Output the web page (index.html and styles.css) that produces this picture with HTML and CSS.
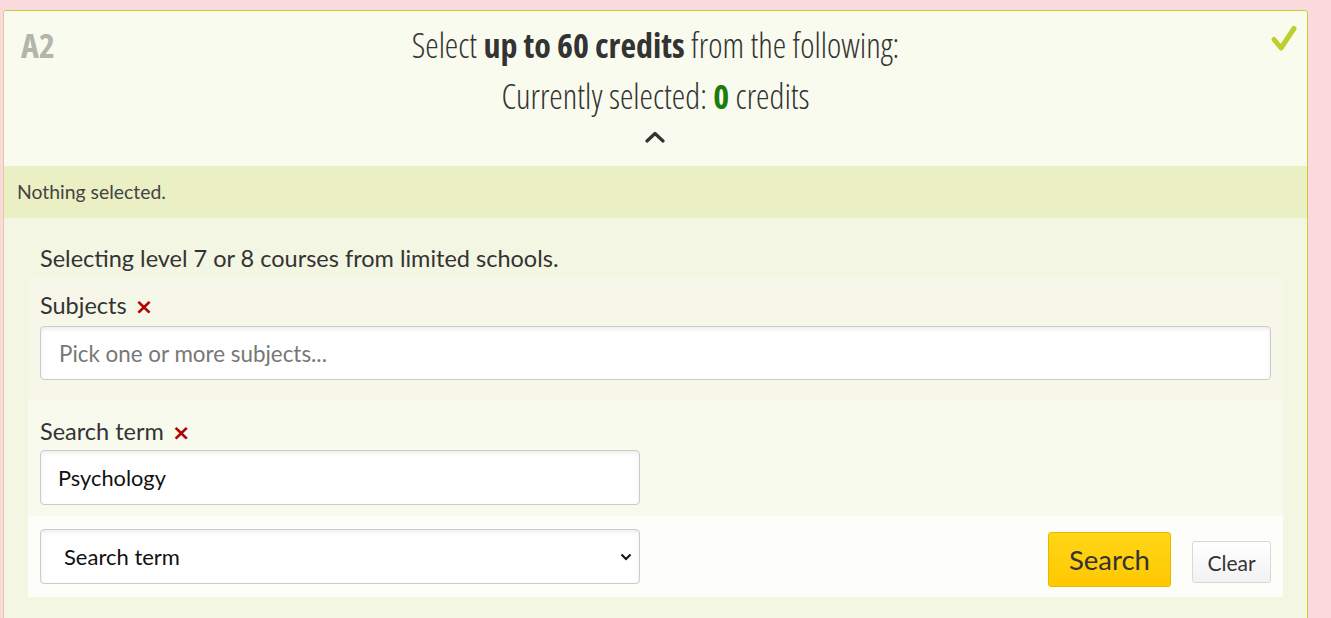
FILE: index.html
```html
<!DOCTYPE html>
<html lang="en">
<head>
<meta charset="utf-8">
<title>Course selection</title>
<link rel="stylesheet" href="styles.css">
</head>
<body>
<section class="card">
  <header class="card-head">
    <div class="code">A2</div>
    <div class="title">
      <p class="title-line">Select <strong>up to 60 credits</strong> from the following:</p>
      <p class="title-line">Currently selected: <strong class="count">0</strong> credits</p>
      <svg class="collapse" width="20" height="12" viewBox="0 0 20 12"><polyline points="2,10 10,2.5 18,10" fill="none" stroke="#333" stroke-width="3.2" stroke-linecap="round" stroke-linejoin="round"/></svg>
    </div>
    <div class="status">
      <svg width="28" height="28" viewBox="0 0 28 28"><polyline points="4,14.5 11,23 24,3.5" fill="none" stroke="#bccf2c" stroke-width="5" stroke-linecap="round" stroke-linejoin="round"/></svg>
    </div>
  </header>
  <div class="selection-bar">Nothing selected.</div>
  <div class="card-body">
    <p class="intro">Selecting level 7 or 8 courses from limited schools.</p>
    <div class="field field-subjects">
      <label class="label">Subjects <span class="remove">×</span></label>
      <input class="input input-wide" type="text" placeholder="Pick one or more subjects...">
    </div>
    <div class="field field-term">
      <label class="label">Search term <span class="remove">×</span></label>
      <input class="input input-half" type="text" value="Psychology">
    </div>
    <div class="actions">
      <div class="select-wrap">
        <select class="select"><option>Search term</option></select>
        <svg class="select-arrow" width="12" height="8" viewBox="0 0 12 8"><polyline points="1.5,1.5 6,6 10.5,1.5" fill="none" stroke="#111" stroke-width="2"/></svg>
      </div>
      <button class="btn btn-search" type="button">Search</button>
      <button class="btn btn-clear" type="button">Clear</button>
    </div>
  </div>
</section>
</body>
</html>
```
FILE: styles.css
```css
* { box-sizing: border-box; }

body {
  margin: 0;
  background: #fadadc;
  font-family: Lato, "Noto Sans", sans-serif;
  color: #333;
}

.card {
  margin: 10px 0 0 3px;
  width: 1305px;
  height: 620px;
  border: 1px solid #c8cc36;
  border-left-color: #e2cc95;
  border-radius: 4px 4px 0 0;
  background: #f3f6e2;
  overflow: hidden;
}

.card-head {
  display: grid;
  grid-template-columns: 1fr auto 1fr;
  height: 155px;
  background: #f9fbee;
  padding-top: 9px;
}

.code {
  font-family: "Open Sans", sans-serif;
  font-stretch: 75%;
  font-weight: 700;
  font-size: 34px;
  color: #b3b6aa;
  padding-left: 17px;
  line-height: 51px;
}

.title {
  text-align: center;
  font-family: "Open Sans", sans-serif;
  font-stretch: 75%;
  font-weight: 300;
  font-size: 34px;
  color: #333;
}

.title-line {
  margin: 0;
  line-height: 51px;
}

.title-line strong { font-weight: 700; }

.count { color: #1e7d0a; }

.collapse {
  display: block;
  margin: 9px auto 0;
}

.status {
  justify-self: end;
  padding: 5px 9px 0 0;
}

.selection-bar {
  height: 52px;
  line-height: 52px;
  padding: 0 13px;
  background: #eaf0c4;
  font-size: 19.4px;
  color: #444;
}

.card-body {
  padding: 0 24px;
}

.intro {
  margin: 0;
  padding: 26px 12px 0;
  line-height: 28px;
  font-size: 23.5px;
  height: 60px;
}

.field {
  padding: 13px 12px 20px;
  background: #f6f7e8;
}

.field-term {
  background: #f8faee;
  padding: 17px 12px 11px;
}

.label {
  display: block;
  height: 28px;
  font-size: 23.5px;
  line-height: 28px;
  color: #333;
}

.field-subjects .label { margin-bottom: 7px; }
.field-term .label { margin-bottom: 5px; }

.remove {
  color: #b00000;
  font-family: "DejaVu Sans", sans-serif;
  font-weight: 700;
  font-size: 22px;
  line-height: 1;
  margin-left: 2px;
}

.input, .select {
  display: block;
  width: 100%;
  height: 54px;
  border: 1px solid #cccccc;
  border-radius: 4px;
  background: #fff;
  box-shadow: inset 0 2px 4px rgba(0, 0, 0, 0.08);
  font-family: Lato, "Noto Sans", sans-serif;
  font-size: 22px;
  color: #111;
  padding: 0 17px;
  outline: none;
}

.input-wide { font-size: 22.4px; padding-left: 18px; }

.input::placeholder { color: #777; }

.input-half {
  width: 600px;
  height: 55px;
  font-size: 21.8px;
}

.actions {
  display: flex;
  align-items: flex-start;
  height: 81px;
  background: #fdfdfa;
  padding: 13px 12px 0;
}

.select-wrap {
  position: relative;
  width: 600px;
}

.select {
  appearance: none;
  -webkit-appearance: none;
  height: 55px;
  padding-left: 23px;
}

.select-arrow {
  position: absolute;
  right: 8px;
  top: 24px;
  pointer-events: none;
}

.btn {
  font-family: Lato, "Noto Sans", sans-serif;
  color: #333;
  border-radius: 3px;
  cursor: pointer;
  padding: 0;
}

.btn-search {
  margin-left: auto;
  margin-top: 3px;
  width: 123px;
  height: 55px;
  font-size: 27.5px;
  background: linear-gradient(#ffd618, #ffc800);
  border: 1px solid #e8b800;
}

.btn-clear {
  margin-left: 21px;
  margin-top: 12px;
  width: 79px;
  height: 42px;
  font-size: 21px;
  background: linear-gradient(#ffffff, #f2f2f2);
  border: 1px solid #d8d8d8;
}
```
